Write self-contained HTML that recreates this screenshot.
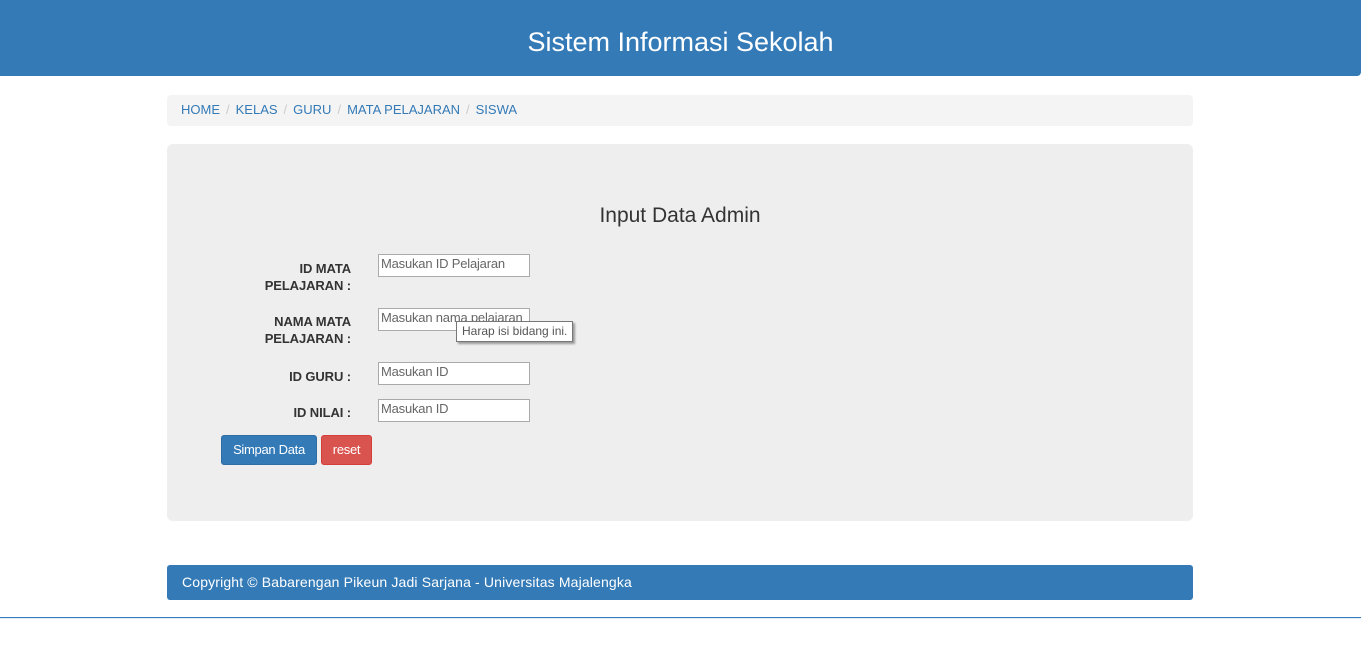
<!DOCTYPE html>
<html><head><meta charset="utf-8"><style>
*{box-sizing:border-box;margin:0;padding:0}
body{width:1362px;height:665px;background:#fff;font-family:"Liberation Sans",Arial,sans-serif;font-size:14px;color:#333;position:relative;overflow:hidden}
.hdr{position:absolute;left:0;top:0;width:1361px;height:76px;background:#337ab7;border-bottom-right-radius:4px;color:#fff;font-size:27px;text-align:center;line-height:84px}
.bc{position:absolute;left:167px;top:95px;width:1026px;height:31px;background:#f4f4f4;border-radius:4px;padding-left:14px;line-height:29px;font-size:13px}
.bc a{color:#337ab7;text-decoration:none}
.bc span{color:#ccc;padding:0 6px}
.panel{position:absolute;left:167px;top:144px;width:1026px;height:377px;background:#eee;border-radius:6px}
h2{position:absolute;left:0;width:1026px;top:60px;text-align:center;font-weight:normal;font-size:21px}
.lbl{position:absolute;right:842px;text-align:right;font-weight:bold;font-size:13px;line-height:17px;color:#333;letter-spacing:-0.1px}
.in{position:absolute;left:211px;width:152px;height:23px;background:#fff;border:1px solid #aaa;color:#666;font-size:13px;padding:0 2px;line-height:18px;white-space:nowrap;overflow:hidden;letter-spacing:-0.2px}
.btn{position:absolute;top:291px;height:30px;border-radius:3px;color:#fff;font-size:13px;line-height:28px;text-align:center;letter-spacing:-0.3px}
.tip{position:absolute;left:289px;top:177px;width:117px;height:21px;background:#fff;border:1px solid #777;font-size:12px;line-height:18px;color:#555;padding-left:5px;box-shadow:2px 2px 2px #999}
.ftr{position:absolute;left:167px;top:565px;width:1026px;height:35px;background:#337ab7;color:#fff;border-radius:3px;padding-left:15px;line-height:34px;font-size:14px;letter-spacing:0.15px}
.line{position:absolute;left:0;top:617px;width:1361px;height:2px;border-top:1px solid #337ab7;border-bottom:1px solid #e4eef7}
</style></head><body>
<div class="hdr">Sistem Informasi Sekolah</div>
<div class="bc"><a>HOME</a><span>/</span><a>KELAS</a><span>/</span><a>GURU</a><span>/</span><a>MATA PELAJARAN</a><span>/</span><a>SISWA</a></div>
<div class="panel">
<h2>Input Data Admin</h2>
<div class="lbl" style="top:116px">ID MATA<br>PELAJARAN :</div>
<div class="in" style="top:110px">Masukan ID Pelajaran</div>
<div class="lbl" style="top:169px">NAMA MATA<br>PELAJARAN :</div>
<div class="in" style="top:164px">Masukan nama pelajaran</div>
<div class="lbl" style="top:224px">ID GURU :</div>
<div class="in" style="top:218px">Masukan ID</div>
<div class="lbl" style="top:260px">ID NILAI :</div>
<div class="in" style="top:255px">Masukan ID</div>
<div class="tip">Harap isi bidang ini.</div>
<div class="btn" style="left:54px;width:96px;background:#337ab7;border:1px solid #2e6da4">Simpan Data</div>
<div class="btn" style="left:154px;width:51px;background:#d9534f;border:1px solid #d43f3a">reset</div>
</div>
<div class="ftr">Copyright © Babarengan Pikeun Jadi Sarjana - Universitas Majalengka</div>
<div class="line"></div>
</body></html>
